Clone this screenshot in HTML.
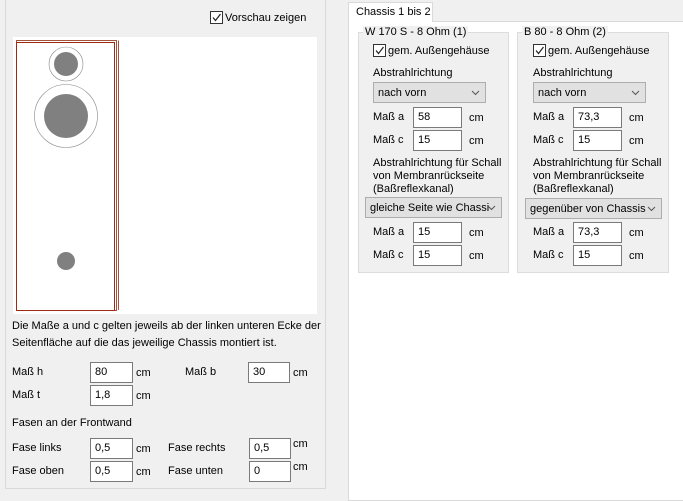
<!DOCTYPE html><html><head><style>
body{margin:0;width:683px;height:493px;background:#f0f0f0;position:relative;overflow:hidden;font-family:"Liberation Sans",sans-serif;font-size:11px;color:#000}
.a{position:absolute;white-space:nowrap}
.i{position:absolute;background:#fff;border:1px solid #7a7a7a;box-sizing:border-box;height:21px;padding:3px 0 0 4px;font-size:11px}
.cb{position:absolute;width:13px;height:13px;border:1px solid #333;box-sizing:border-box;background:#fff}
.cb svg{position:absolute;left:0;top:0}
.co{position:absolute;background:#e1e1e1;border:1px solid #adadad;box-sizing:border-box;height:21px;padding:4px 0 0 4px;overflow:hidden}
.co svg{position:absolute;right:5px;top:7px}
.gb{position:absolute;border:1px solid #dcdcdc;background:#f0f0f0;box-sizing:border-box}
</style></head><body>
<div style="position:absolute;left:5px;top:-2px;width:321px;height:491px;border:1px solid #d9d9d9;box-sizing:border-box"></div>
<div class="cb" style="left:210px;top:11px"><svg width="11" height="11"><path d="M2 5.5 L4.5 8.5 L9.5 2" stroke="#222" fill="none" stroke-width="1.2"/></svg></div>
<div class="a" style="left:225px;top:12px">Vorschau zeigen</div>
<svg style="position:absolute;left:13px;top:37px" width="304" height="277">
<rect width="304" height="277" fill="#fff"/>
<rect x="3.5" y="3.5" width="100" height="270" fill="none" stroke="#8b2a10" stroke-width="0.8"/>
<rect x="3.5" y="5.5" width="98" height="268" fill="none" stroke="#a02a10" stroke-width="1"/>
<path d="M105.5 3.5 L105.5 273" stroke="#8b2a10" stroke-width="0.8"/>
<circle cx="53" cy="27" r="17" fill="none" stroke="#888" stroke-width="0.6"/>
<circle cx="53" cy="27" r="12" fill="#808080"/>
<circle cx="53" cy="79" r="31.5" fill="none" stroke="#888" stroke-width="0.6"/>
<circle cx="53" cy="79" r="22" fill="#808080"/>
<circle cx="53" cy="224" r="9" fill="#808080"/>
</svg>
<div class="a" style="left:12px;top:320px">Die Maße a und c gelten jeweils ab der linken unteren Ecke der</div>
<div class="a" style="left:12px;top:337px">Seitenfläche auf die das jeweilige Chassis montiert ist.</div>
<div class="a" style="left:12px;top:366px">Maß h</div><div class="i" style="left:90px;top:362px;width:43px">80</div><div class="a" style="left:136px;top:367px">cm</div>
<div class="a" style="left:185px;top:366px">Maß b</div><div class="i" style="left:248px;top:362px;width:42px">30</div><div class="a" style="left:293px;top:367px">cm</div>
<div class="a" style="left:12px;top:389px">Maß t</div><div class="i" style="left:90px;top:385px;width:43px">1,8</div><div class="a" style="left:136px;top:390px">cm</div>
<div class="a" style="left:12px;top:417px">Fasen an der Frontwand</div>
<div class="a" style="left:12px;top:442px">Fase links</div><div class="i" style="left:90px;top:438px;width:43px">0,5</div><div class="a" style="left:136px;top:443px">cm</div>
<div class="a" style="left:168px;top:442px">Fase rechts</div><div class="i" style="left:249px;top:438px;width:42px">0,5</div><div class="a" style="left:293px;top:438px">cm</div>
<div class="a" style="left:12px;top:465px">Fase oben</div><div class="i" style="left:90px;top:461px;width:43px">0,5</div><div class="a" style="left:136px;top:466px">cm</div>
<div class="a" style="left:168px;top:465px">Fase unten</div><div class="i" style="left:249px;top:461px;width:42px">0</div><div class="a" style="left:293px;top:461px">cm</div>
<div style="position:absolute;left:348px;top:21px;width:340px;height:480px;background:#fff;border:1px solid #d9d9d9;box-sizing:border-box"></div>
<div style="position:absolute;left:348px;top:2px;width:85px;height:20px;background:#fff;border:1px solid #d9d9d9;border-bottom:none;box-sizing:border-box"></div>
<div class="a" style="left:356px;top:6px">Chassis 1 bis 2</div>

<div class="gb" style="left:358px;top:32px;width:151px;height:241px"></div>
<div class="a" style="left:363px;top:26px;background:#f0f0f0;padding:0 2px">W 170 S - 8 Ohm (1)</div>
<div class="cb" style="left:373px;top:44px"><svg width="11" height="11"><path d="M2 5.5 L4.5 8.5 L9.5 2" stroke="#222" fill="none" stroke-width="1.2"/></svg></div>
<div class="a" style="left:388px;top:45px">gem. Außengehäuse</div>
<div class="a" style="left:373px;top:67px">Abstrahlrichtung</div>
<div class="co" style="left:373px;top:82px;width:113px">nach vorn<svg width="9" height="6"><path d="M1 1 L4.5 4.5 L8 1" stroke="#555" fill="none"/></svg></div>
<div class="a" style="left:373px;top:111px">Maß a</div><div class="i" style="left:413px;top:107px;width:49px">58</div><div class="a" style="left:469px;top:112px">cm</div>
<div class="a" style="left:373px;top:134px">Maß c</div><div class="i" style="left:413px;top:130px;width:49px">15</div><div class="a" style="left:469px;top:135px">cm</div>
<div class="a" style="left:373px;top:157px;line-height:13px">Abstrahlrichtung für Schall<br>von Membranrückseite<br>(Baßreflexkanal)</div>
<div class="co" style="left:365px;top:197px;width:137px">gleiche Seite wie Chassi<svg width="9" height="6"><path d="M1 1 L4.5 4.5 L8 1" stroke="#555" fill="none"/></svg></div>
<div class="a" style="left:373px;top:226px">Maß a</div><div class="i" style="left:413px;top:222px;width:49px">15</div><div class="a" style="left:469px;top:227px">cm</div>
<div class="a" style="left:373px;top:249px">Maß c</div><div class="i" style="left:413px;top:245px;width:49px">15</div><div class="a" style="left:469px;top:250px">cm</div>

<div class="gb" style="left:517px;top:32px;width:152px;height:241px"></div>
<div class="a" style="left:522px;top:26px;background:#f0f0f0;padding:0 2px">B 80 - 8 Ohm (2)</div>
<div class="cb" style="left:533px;top:44px"><svg width="11" height="11"><path d="M2 5.5 L4.5 8.5 L9.5 2" stroke="#222" fill="none" stroke-width="1.2"/></svg></div>
<div class="a" style="left:548px;top:45px">gem. Außengehäuse</div>
<div class="a" style="left:533px;top:67px">Abstrahlrichtung</div>
<div class="co" style="left:533px;top:82px;width:113px">nach vorn<svg width="9" height="6"><path d="M1 1 L4.5 4.5 L8 1" stroke="#555" fill="none"/></svg></div>
<div class="a" style="left:533px;top:111px">Maß a</div><div class="i" style="left:573px;top:107px;width:49px">73,3</div><div class="a" style="left:629px;top:112px">cm</div>
<div class="a" style="left:533px;top:134px">Maß c</div><div class="i" style="left:573px;top:130px;width:49px">15</div><div class="a" style="left:629px;top:135px">cm</div>
<div class="a" style="left:533px;top:157px;line-height:13px">Abstrahlrichtung für Schall<br>von Membranrückseite<br>(Baßreflexkanal)</div>
<div class="co" style="left:525px;top:198px;width:137px">gegenüber von Chassis<svg width="9" height="6"><path d="M1 1 L4.5 4.5 L8 1" stroke="#555" fill="none"/></svg></div>
<div class="a" style="left:533px;top:226px">Maß a</div><div class="i" style="left:573px;top:222px;width:49px">73,3</div><div class="a" style="left:629px;top:227px">cm</div>
<div class="a" style="left:533px;top:249px">Maß c</div><div class="i" style="left:573px;top:245px;width:49px">15</div><div class="a" style="left:629px;top:250px">cm</div>
</body></html>
